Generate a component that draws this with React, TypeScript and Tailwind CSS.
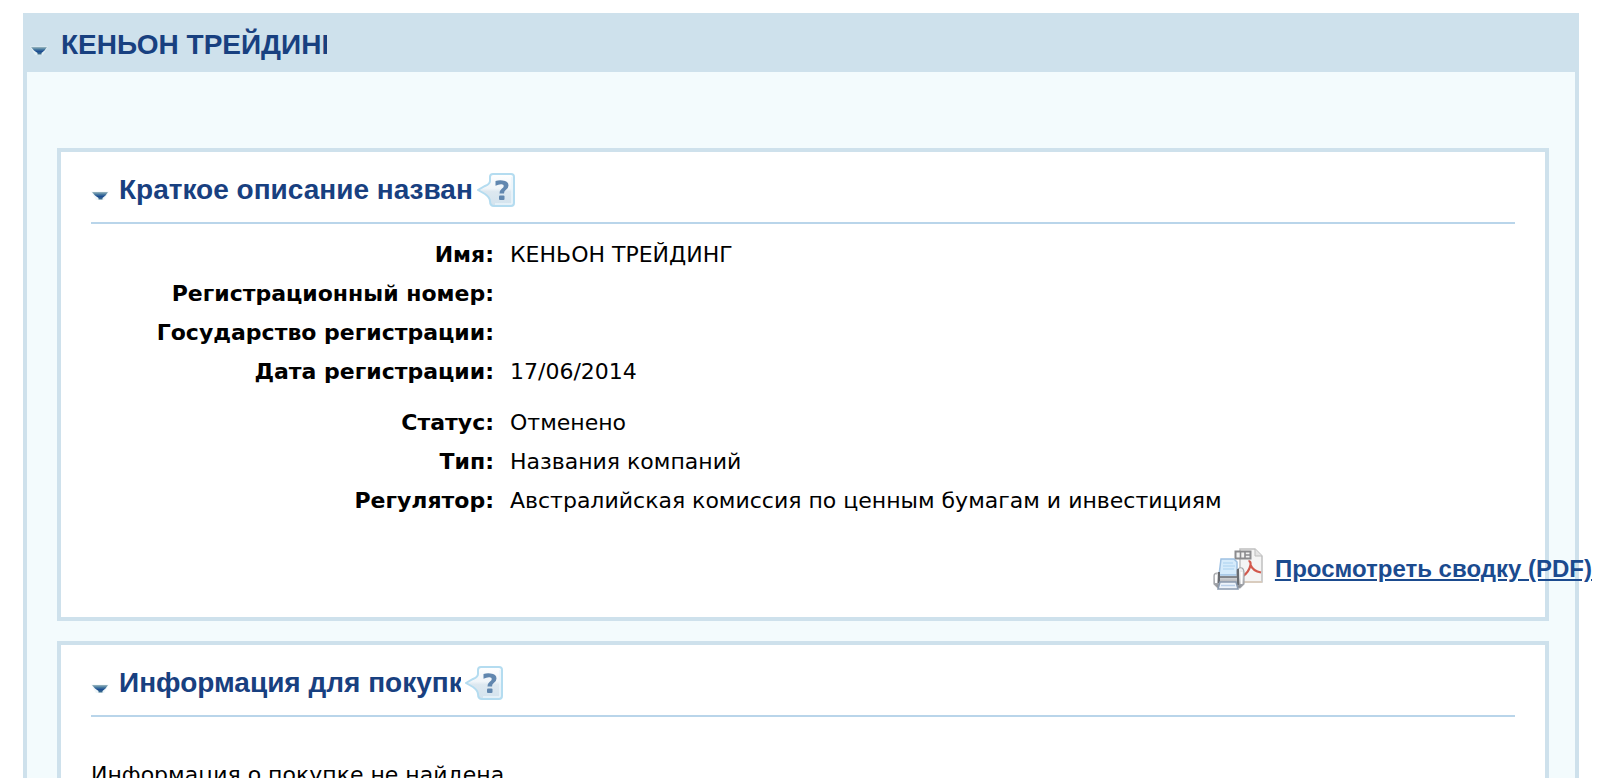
import type { ReactNode } from "react";

function Arrow() {
  return (
    <svg width="18" height="10" viewBox="0 0 18 10" className="block shrink-0" aria-hidden="true">
      <defs>
        <linearGradient id="arrow" x1="0" y1="0" x2="0" y2="1">
          <stop offset="0" stopColor="#9db8c0" />
          <stop offset="0.3" stopColor="#4a7ca0" />
          <stop offset="0.6" stopColor="#1c4d92" />
          <stop offset="1" stopColor="#3f6f8a" />
        </linearGradient>
      </defs>
      <path d="M0 0.5H18L13 9H5Z" fill="#e9f4f7" opacity="0.7" />
      <path d="M1 1H17L14.500 4.500L11.500 7V8.500H7.500V7L4 4.500Z" fill="url(#arrow)" />
    </svg>
  );
}

function HelpIcon() {
  return (
    <svg width="38" height="34" viewBox="0 0 38 34" className="block" aria-hidden="true">
      <defs>
        <linearGradient id="bubble" x1="0" y1="0" x2="0" y2="1">
          <stop offset="0" stopColor="#ffffff" />
          <stop offset="0.45" stopColor="#f0f5f9" />
          <stop offset="0.55" stopColor="#dde8f0" />
          <stop offset="1" stopColor="#d3e3ee" />
        </linearGradient>
      </defs>
      <path
        d="M16 1H34Q37 1 37 4V30Q37 33 34 33H17Q13 33 13 28Q12.500 24 8 21L1 17L8 13Q13 11 13 8V4Q13 1 16 1Z"
        fill="url(#bubble)"
        stroke="#b4dcf0"
        strokeWidth="2"
      />
      <path d="M35 4V30Q35 31 34 31H18" fill="none" stroke="#eaf5fb" strokeWidth="1.500" />
      <path
        d="M18.500 8Q22 7 25.500 7.500Q31.500 8.200 31.500 12.500Q31.500 15.500 28.500 17.200Q27 18.300 27 20.500H22.500Q22.300 17.500 24.500 16Q26.800 14.500 26.800 13Q26.800 11 24 11.200Q21.500 11.400 18.500 12.800Z"
        fill="#6187af"
      />
      <rect x="22" y="22.500" width="5.500" height="4.500" rx="1" fill="#6187af" />
    </svg>
  );
}

function PrintPdfIcon() {
  return (
    <svg width="50" height="42" viewBox="0 0 50 42" className="block shrink-0" aria-hidden="true">
      <defs>
        <linearGradient id="printer" x1="0" y1="0" x2="0" y2="1">
          <stop offset="0" stopColor="#f5f5f5" />
          <stop offset="0.5" stopColor="#d2d3d5" />
          <stop offset="1" stopColor="#80848c" />
        </linearGradient>
      </defs>
      <path d="M27 1H42L49 8V34H27Z" fill="#f4f4f4" stroke="#c0c0c0" strokeWidth="1.500" />
      <path d="M42 1V8H49" fill="#e4e4e4" stroke="#bdbdbd" />
      <path d="M31 34H49" stroke="#dccbb9" strokeWidth="1.500" />
      <path
        d="M35.500 13Q38 13 37.500 17Q40 23 48 24.500M37.500 17Q36 24 30 28"
        fill="none"
        stroke="#d2584c"
        strokeWidth="2.200"
      />
      <rect x="22.500" y="3.500" width="15" height="7" fill="#f2f2f2" stroke="#8b8b8e" strokeWidth="2" />
      <path d="M27.500 4V10M32 4V10M32 7H37" stroke="#8b8b8e" strokeWidth="1.600" />
      <path d="M8 11H21L24 14V27H6Z" fill="#d6ebfb" stroke="#9fc1e2" strokeWidth="1.500" />
      <path d="M10 15H20M10 18H22M10 21H21" stroke="#b9daf3" strokeWidth="1.500" />
      <path
        d="M1 28Q1 25 4 25H6V29H24V22Q26 19 29 20Q31 21 31 25V36L27 40H5L1 36Z"
        fill="url(#printer)"
        stroke="#a3a5a9"
        strokeWidth="1.200"
      />
      <path d="M6 24V35M25 21V37" stroke="#686b70" strokeWidth="2" />
      <path d="M3 27V35M28.500 24V36" stroke="#ffffff" strokeWidth="2" />
      <path d="M7 29H24" stroke="#7c7f85" strokeWidth="1.800" />
      <path d="M7 34H23L25 41H5Z" fill="#edf3fa" stroke="#8b9bb0" strokeWidth="1.500" />
      <path d="M8 37.500H22" stroke="#b9cfe9" strokeWidth="1.500" />
    </svg>
  );
}

type PanelProps = { title: string; titleClass: string; children: ReactNode };

function Panel({ title, titleClass, children }: PanelProps) {
  return (
    <section className="border-4 border-[#cee1ec] bg-white px-[30px]">
      <header className="flex h-[72px] items-center border-b-2 border-[#b9d5ea] pt-1.5">
        <button type="button" aria-label={title} className="mt-3 mr-2.5">
          <Arrow />
        </button>
        <h2 className={`overflow-hidden text-[28px] leading-9 font-bold whitespace-nowrap text-[#184080] ${titleClass}`}>
          {title}
        </h2>
        <button type="button" aria-label="Справка" className="ml-1">
          <HelpIcon />
        </button>
      </header>
      {children}
    </section>
  );
}

const groups: [string, string][][] = [
  [
    ["Имя:", "КЕНЬОН ТРЕЙДИНГ"],
    ["Регистрационный номер:", ""],
    ["Государство регистрации:", ""],
    ["Дата регистрации:", "17/06/2014"],
  ],
  [
    ["Статус:", "Отменено"],
    ["Тип:", "Названия компаний"],
    ["Регулятор:", "Австралийская комиссия по ценным бумагам и инвестициям"],
  ],
];

export default function App() {
  return (
    <div className="min-h-screen bg-white pt-[13px] pr-[19px] pl-[23px] font-['Liberation_Sans',Arial,sans-serif]">
      <main className="border-4 border-t-0 border-[#cee1ec] bg-[#f3fbfd] pb-5">
        <header className="flex h-[59px] items-center bg-[#cee1ec] pl-[3px]">
          <button type="button" aria-label="КЕНЬОН ТРЕЙДИНГ" className="mt-4 mr-[13px]">
            <Arrow />
          </button>
          <h1 className="w-[266px] overflow-hidden pt-1 text-[28px] leading-9 font-bold whitespace-nowrap text-[#184080]">
            КЕНЬОН ТРЕЙДИНГ
          </h1>
        </header>
        <div className="flex flex-col gap-5 pt-[76px] pr-[26px] pl-[30px]">
          <Panel title="Краткое описание назван" titleClass="w-[354px]">
            <div className="flex flex-col gap-3 pt-[11px] font-['DejaVu_Sans',Verdana,sans-serif] text-[22px] leading-[39px] text-black">
              {groups.map((rows, i) => (
                <dl key={i} className="grid grid-cols-[403px_1fr] gap-x-4">
                  {rows.map(([label, value]) => (
                    <div key={label} className="contents">
                      <dt className="text-right font-bold whitespace-nowrap">{label}</dt>
                      <dd className="whitespace-nowrap">{value}</dd>
                    </div>
                  ))}
                </dl>
              ))}
            </div>
            <div className="flex justify-end pt-7 pb-[27px]">
              <a
                href="#summary"
                className="-mr-[77px] flex items-center gap-3 text-2xl leading-[42px] font-bold whitespace-nowrap text-[#1b4b8f]"
              >
                <PrintPdfIcon />
                <span className="underline">Просмотреть сводку (PDF)</span>
              </a>
            </div>
          </Panel>
          <Panel title="Информация для покупки" titleClass="w-[342px]">
            <p className="pt-[38px] pb-10 font-['DejaVu_Sans',Verdana,sans-serif] text-[22px] leading-[39px] text-black">
              Информация о покупке не найдена
            </p>
          </Panel>
        </div>
      </main>
    </div>
  );
}
